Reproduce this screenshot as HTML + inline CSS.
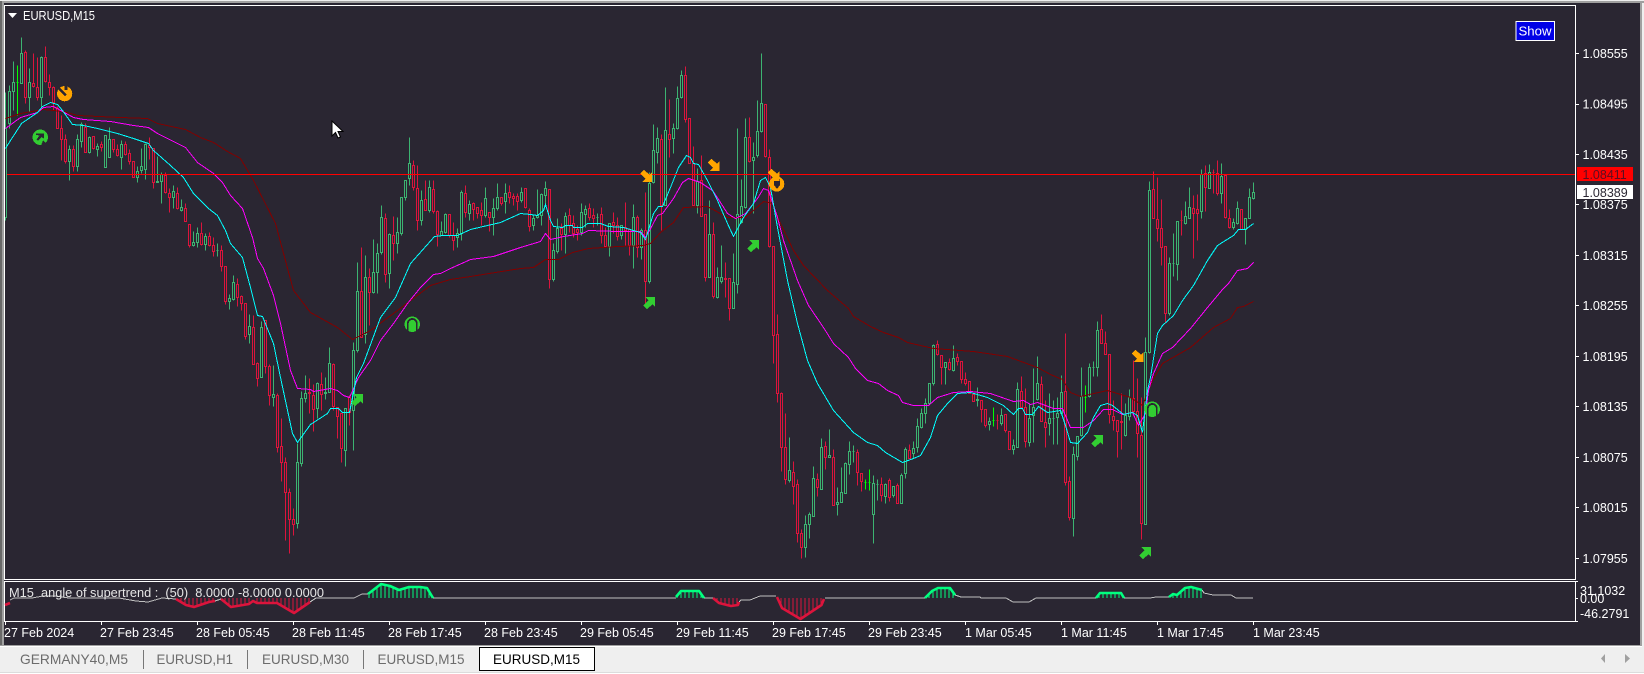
<!DOCTYPE html>
<html><head><meta charset="utf-8"><title>EURUSD,M15</title>
<style>
html,body{margin:0;padding:0;width:1644px;height:674px;overflow:hidden;background:#efefef}
svg{display:block;font-family:"Liberation Sans",Arial,sans-serif}
text{white-space:pre}
.p{font-size:12.5px;fill:#fff}
.t{font-size:14px;fill:#6c6c6c}
.c{fill:none;shape-rendering:crispEdges}
.l{fill:none;stroke-width:1;shape-rendering:crispEdges}
</style></head><body>
<svg width="1644" height="674" viewBox="0 0 1644 674" xmlns="http://www.w3.org/2000/svg">
<rect width="1644" height="674" fill="#efefef"/>
<rect x="0" y="1" width="1644" height="2" fill="#a0a0a0"/>
<rect x="0" y="1" width="2" height="645" fill="#696969"/>
<rect x="2" y="1" width="2" height="645" fill="#a0a0a0"/>
<rect x="1640" y="1" width="2" height="645" fill="#a0a0a0"/>
<rect x="4" y="3" width="1636" height="642" fill="#2a2632"/>
<rect x="0" y="645" width="1642" height="1" fill="#a0a0a0"/>
<rect x="0" y="646" width="1642" height="1" fill="#fff"/>
<g transform="translate(.5 .5)">
<path class="c" stroke="#3cb371" d="M5 92V128M4 128h2V217h-2zM5 217V220M9 85V91M8 91h2V123h-2zM9 123V128M13 61V82M12 82h2V91h-2zM13 91V110M21 37V53M20 53h2V83h-2zM29 68V82M28 82h2V97h-2zM29 97V112M41 56V57M40 57h2V97h-2zM41 97V106M69 145V149M68 149h2V161h-2zM69 161V180M77 134V139M76 139h2V166h-2zM77 166V171M81 122V124M80 124h2V141h-2zM81 141V147M89 136V137M88 137h2V152h-2zM89 152V153M97 143V146M96 146h2V149h-2zM97 149V156M104 135h2V167h-2zM109 127V139M108 139h2V157h-2zM121 140V144M120 144h2V157h-2zM121 157V169M137 166V171M136 171h2V177h-2zM137 177V182M141 148V166M140 166h2V170h-2zM141 170V173M145 143V144M144 144h2V169h-2zM145 169V179M157 156V181M156 181h2V182h-2zM161 172V174M160 174h2V181h-2zM161 181V203M173 185V191M172 191h2V197h-2zM173 197V208M181 199V207M180 207h2V210h-2zM181 210V211M193 231V242M192 242h2V245h-2zM193 245V246M197 227V233M196 233h2V242h-2zM197 242V247M205 233V236M204 236h2V244h-2zM205 244V250M217 243V250M216 250h2M217 250V256M229 294V298M228 298h2V301h-2zM229 301V309M233 275V282M232 282h2V299h-2zM233 299V300M249 314V326M248 326h2V334h-2zM249 334V343M261 321V327M260 327h2V377h-2zM273 365V394M272 394h2V397h-2zM273 397V406M297 443V462M296 462h2V523h-2zM297 523V528M301 391V398M300 398h2V463h-2zM301 463V466M305 375V393M304 393h2V398h-2zM305 398V402M317 382V383M316 383h2V408h-2zM317 408V418M325 377V392M324 392h2V393h-2zM325 393V399M329 347V363M328 363h2V392h-2zM344 408h2V450h-2zM345 450V466M353 342V350M352 350h2V410h-2zM353 410V450M357 262V291M356 291h2V350h-2zM357 350V352M365 255V277M364 277h2V334h-2zM365 334V343M373 239V272M372 272h2V292h-2zM373 292V293M377 243V253M376 253h2V272h-2zM377 272V293M381 205V217M380 217h2V252h-2zM381 252V254M389 233V234M388 234h2V273h-2zM389 273V288M397 217V232M396 232h2V243h-2zM397 243V253M400 197h2V233h-2zM401 233V235M404 180h2V197h-2zM405 197V200M409 137V163M408 163h2V178h-2zM409 178V185M421 190V200M420 200h2V220h-2zM421 220V225M429 180V187M428 187h2V210h-2zM429 210V212M441 221V231M440 231h2V235h-2zM445 213V214M444 214h2V232h-2zM445 232V233M457 228V233M456 233h2V237h-2zM457 237V247M461 190V192M460 192h2V233h-2zM461 233V240M469 200V204M468 204h2V213h-2zM469 213V220M485 187V198M484 198h2V215h-2zM485 215V217M493 198V208M492 208h2V217h-2zM493 217V235M497 183V197M496 197h2V208h-2zM497 208V210M505 183V193M504 193h2V201h-2zM505 201V213M521 187V192M520 192h2V200h-2zM521 200V202M533 215V218M532 218h2V225h-2zM533 225V230M537 189V215M536 215h2V217h-2zM537 217V218M541 193V194M540 194h2V215h-2zM541 215V225M545 181V188M544 188h2V195h-2zM545 195V205M553 243V250M552 250h2V279h-2zM553 279V281M557 218V228M556 228h2V251h-2zM557 251V253M565 212V216M564 216h2V234h-2zM565 234V253M581 203V212M580 212h2V232h-2zM581 232V235M585 205V209M584 209h2V214h-2zM585 214V227M597 213V217M596 217h2M597 217V225M608 223h2V246h-2zM609 246V256M620 225h2V235h-2zM621 235V239M633 204V217M632 217h2V245h-2zM633 245V268M641 228V230M640 230h2V247h-2zM641 247V259M649 172V183M648 183h2V281h-2zM649 281V283M653 124V150M652 150h2V182h-2zM653 182V183M657 127V138M656 138h2V152h-2zM657 152V163M665 87V130M664 130h2V205h-2zM673 123V128M672 128h2V138h-2zM673 138V153M677 86V98M676 98h2V128h-2zM677 128V129M681 70V75M680 75h2V97h-2zM681 97V98M697 168V181M696 181h2V205h-2zM697 205V213M709 200V234M708 234h2V277h-2zM717 267V277M716 277h2V297h-2zM717 297V298M721 245V277M720 277h2V281h-2zM721 281V283M733 253V282M732 282h2V308h-2zM737 128V214M736 214h2V284h-2zM737 284V293M741 179V206M740 206h2V222h-2zM741 222V223M745 118V137M744 137h2V207h-2zM745 207V208M753 142V157M752 157h2V160h-2zM753 160V213M757 100V131M756 131h2V155h-2zM757 155V157M761 53V103M760 103h2V131h-2zM761 131V132M789 437V470M788 470h2V480h-2zM789 480V482M805 515V524M804 524h2V547h-2zM805 547V557M809 512V514M808 514h2V524h-2zM809 524V538M813 466V478M812 478h2V516h-2zM821 438V447M820 447h2V489h-2zM829 429V455M828 455h2V457h-2zM837 487V502M836 502h2V504h-2zM837 504V515M841 467V492M840 492h2V502h-2zM845 462V463M844 463h2V493h-2zM849 441V451M848 451h2V464h-2zM849 464V474M853 445V451M852 451h2M853 451V462M873 475V483M872 483h2V514h-2zM873 514V543M877 479V484M876 484h2M877 484V500M885 483V484M884 484h2V496h-2zM885 496V503M892 486h2V495h-2zM893 495V497M901 473V475M900 475h2V503h-2zM905 447V449M904 449h2V473h-2zM905 473V478M913 441V448M912 448h2V453h-2zM913 453V458M917 418V426M916 426h2V447h-2zM917 447V452M921 408V413M920 413h2V427h-2zM921 427V428M925 398V403M924 403h2V413h-2zM925 413V423M928 383h2V403h-2zM929 403V405M933 344V345M932 345h2V383h-2zM933 383V385M944 362h2V367h-2zM945 367V384M953 345V358M952 358h2V370h-2zM953 370V371M977 387V399M976 399h2V400h-2zM977 400V406M989 417V421M988 421h2V424h-2zM989 424V430M1001 408V415M1000 415h2V423h-2zM1001 423V425M1013 439V445M1012 445h2V449h-2zM1013 449V454M1017 382V389M1016 389h2V447h-2zM1029 403V418M1028 418h2V442h-2zM1029 442V446M1033 368V407M1032 407h2V415h-2zM1033 415V442M1037 356V383M1036 383h2V399h-2zM1037 399V400M1049 393V418M1048 418h2V423h-2zM1049 423V435M1053 400V418M1052 418h2M1053 418V444M1057 397V413M1056 413h2V417h-2zM1057 417V444M1061 375V392M1060 392h2V413h-2zM1061 413V414M1073 446V454M1072 454h2V518h-2zM1073 518V536M1076 436h2V456h-2zM1077 456V460M1081 367V396M1080 396h2V435h-2zM1081 435V436M1089 363V367M1088 367h2V396h-2zM1089 396V397M1093 361V367M1092 367h2M1093 367V376M1097 321V330M1096 330h2V367h-2zM1097 367V376M1125 403V415M1124 415h2V435h-2zM1125 435V436M1129 389V397M1128 397h2V416h-2zM1129 416V420M1145 337V352M1144 352h2V524h-2zM1149 181V190M1148 190h2V352h-2zM1149 352V353M1169 257V263M1168 263h2V313h-2zM1169 313V315M1173 233V263M1172 263h2M1173 263V276M1176 221h2V264h-2zM1177 264V280M1185 201V216M1184 216h2V223h-2zM1185 223V224M1189 187V207M1188 207h2V218h-2zM1201 169V174M1200 174h2V211h-2zM1201 211V218M1209 164V172M1208 172h2V188h-2zM1221 163V176M1220 176h2V193h-2zM1221 193V203M1233 218V222M1232 222h2V227h-2zM1233 227V229M1237 201V208M1236 208h2V223h-2zM1237 223V224M1244 218h2V229h-2zM1245 229V244M1249 188V197M1248 197h2V218h-2zM1253 182V192M1252 192h2V198h-2zM1253 198V199"/>
<path class="c" stroke="#00ff00" d="M17 65V115M16 82h2M865 479V489M864 482h2M869 469V490M868 482h2M993 407V426M992 420h2M1085 385V412M1084 397h2"/>
<path class="c" stroke="#dc143c" d="M25 50V52M24 52h2V97h-2zM25 97V103M33 53V83M32 83h2V86h-2zM33 86V87M37 57V87M36 87h2V97h-2zM37 97V100M45 46V57M44 57h2V81h-2zM45 81V82M49 74V82M48 82h2V87h-2zM49 87V95M53 86V87M52 87h2V102h-2zM53 102V110M57 106V108M56 108h2V128h-2zM61 115V128M60 128h2V139h-2zM61 139V160M65 134V139M64 139h2V161h-2zM65 161V163M73 145V149M72 149h2V166h-2zM73 166V171M85 123V127M84 127h2V152h-2zM92 136h2V148h-2zM93 148V149M101 141V144M100 144h2V147h-2zM101 147V151M112 139h2V149h-2zM113 149V152M117 144V149M116 149h2V155h-2zM117 155V156M125 141V144M124 144h2V154h-2zM125 154V155M129 149V153M128 153h2V161h-2zM129 161V164M132 161h2V177h-2zM149 137V145M148 145h2V147h-2zM149 147V159M152 148h2V182h-2zM153 182V188M165 172V175M164 175h2V192h-2zM165 192V193M169 188V193M168 193h2V197h-2zM169 197V212M177 187V193M176 193h2V208h-2zM177 208V209M185 203V208M184 208h2V221h-2zM188 224h2V245h-2zM189 245V247M201 222V233M200 233h2V244h-2zM201 244V245M209 232V236M208 236h2V245h-2zM209 245V246M213 237V245M212 245h2V251h-2zM213 251V256M221 245V250M220 250h2V266h-2zM221 266V271M224 266h2V301h-2zM225 301V304M237 278V284M236 284h2V297h-2zM237 297V306M241 295V296M240 296h2V303h-2zM241 303V310M244 303h2V336h-2zM245 336V339M253 315V327M252 327h2V364h-2zM257 362V363M256 363h2V378h-2zM257 378V386M264 320h2V366h-2zM265 366V373M269 364V366M268 366h2V395h-2zM269 395V405M277 393V395M276 395h2V447h-2zM277 447V452M281 418V446M280 446h2V462h-2zM281 462V481M285 457V462M284 462h2V492h-2zM285 492V540M289 488V492M288 492h2V519h-2zM289 519V553M293 508V519M292 519h2V524h-2zM293 524V535M309 378V392M308 392h2V393h-2zM309 393V413M313 384V395M312 395h2V409h-2zM313 409V431M321 372V384M320 384h2V394h-2zM321 394V410M333 363V364M332 364h2V406h-2zM333 406V410M336 407h2V416h-2zM337 416V438M340 413h2V448h-2zM341 448V462M349 395V397M348 397h2V412h-2zM349 412V425M361 247V291M360 291h2V337h-2zM369 268V277M368 277h2V292h-2zM369 292V325M385 213V218M384 218h2V274h-2zM385 274V282M393 216V235M392 235h2V243h-2zM393 243V260M413 160V165M412 165h2V187h-2zM413 187V190M417 165V188M416 188h2V220h-2zM417 220V230M425 180V199M424 199h2V210h-2zM433 180V189M432 189h2V211h-2zM433 211V213M437 210V211M436 211h2V234h-2zM437 234V246M448 214h2V235h-2zM449 235V237M453 222V235M452 235h2V240h-2zM453 240V250M465 185V193M464 193h2V212h-2zM465 212V217M473 202V203M472 203h2V209h-2zM473 209V220M476 207h2V213h-2zM477 213V218M481 202V210M480 210h2V215h-2zM481 215V225M488 212h2V217h-2zM489 217V231M500 197h2V203h-2zM501 203V205M509 185V192M508 192h2V197h-2zM509 197V203M513 193V196M512 196h2V198h-2zM513 198V205M517 193V196M516 196h2V201h-2zM517 201V210M524 188h2V207h-2zM525 207V208M529 208V210M528 210h2V226h-2zM529 226V231M548 189h2V279h-2zM549 279V288M561 223V228M560 228h2V234h-2zM561 234V250M569 208V215M568 215h2V225h-2zM569 225V232M573 215V223M572 223h2V233h-2zM573 233V237M577 225V229M576 229h2V232h-2zM577 232V240M589 203V208M588 208h2V217h-2zM589 217V220M593 208V215M592 215h2V218h-2zM593 218V227M601 207V214M600 214h2V235h-2zM601 235V243M605 227V235M604 235h2V246h-2zM605 246V247M613 212V222M612 222h2V225h-2zM613 225V233M617 217V225M616 225h2V236h-2zM617 236V240M625 202V227M624 227h2V230h-2zM625 230V245M629 228V229M628 229h2V245h-2zM629 245V255M637 215V217M636 217h2V247h-2zM637 247V257M645 192V230M644 230h2V281h-2zM645 281V303M661 134V139M660 139h2V205h-2zM661 205V230M669 99V134M668 134h2V139h-2zM669 139V157M685 66V75M684 75h2V119h-2zM685 119V122M688 118h2V163h-2zM693 146V163M692 163h2V205h-2zM701 155V180M700 180h2V216h-2zM704 214h2V277h-2zM705 277V281M713 222V234M712 234h2V296h-2zM713 296V298M725 262V278M724 278h2V279h-2zM725 279V297M728 278h2V308h-2zM729 308V320M749 117V137M748 137h2V161h-2zM749 161V162M764 104h2V156h-2zM765 156V157M769 149V157M768 157h2V246h-2zM769 246V247M772 246h2V335h-2zM773 335V363M777 314V334M776 334h2V393h-2zM777 393V402M781 392V393M780 393h2V447h-2zM781 447V471M785 413V447M784 447h2V479h-2zM785 479V484M793 461V472M792 472h2V486h-2zM793 486V504M797 479V484M796 484h2V533h-2zM797 533V542M801 529V533M800 533h2V547h-2zM801 547V558M817 473V479M816 479h2V487h-2zM817 487V496M825 441V446M824 446h2V457h-2zM825 457V469M833 449V457M832 457h2V505h-2zM857 449V452M856 452h2V472h-2zM857 472V485M860 473h2V481h-2zM861 481V491M881 477V484M880 484h2V495h-2zM881 495V501M889 478V480M888 480h2V497h-2zM889 497V501M897 483V485M896 485h2V503h-2zM909 444V450M908 450h2V458h-2zM937 340V344M936 344h2V354h-2zM937 354V355M940 355h2V367h-2zM941 367V384M949 358V362M948 362h2V369h-2zM949 369V370M957 353V357M956 357h2V361h-2zM957 361V365M960 361h2V379h-2zM961 379V383M965 372V379M964 379h2V383h-2zM965 383V385M968 381h2V393h-2zM972 394h2V401h-2zM980 400h2V409h-2zM981 409V422M984 409h2V425h-2zM985 425V427M997 414V429M996 420h2M1004 414h2V430h-2zM1005 430V432M1008 431h2V449h-2zM1021 376V391M1020 391h2V407h-2zM1025 388V407M1024 407h2V441h-2zM1025 441V447M1041 376V384M1040 384h2V421h-2zM1045 400V422M1044 422h2V427h-2zM1045 427V447M1065 333V391M1064 391h2V482h-2zM1065 482V485M1069 476V481M1068 481h2V517h-2zM1069 517V520M1101 314V329M1100 329h2V343h-2zM1105 331V343M1104 343h2V354h-2zM1108 354h2V414h-2zM1109 414V423M1113 400V416M1112 416h2V420h-2zM1113 420V430M1116 420h2V431h-2zM1117 431V457M1121 393V421M1120 421h2V422h-2zM1121 422V449M1133 360V398M1132 398h2V411h-2zM1133 411V413M1137 378V411M1136 411h2V433h-2zM1137 433V457M1141 397V435M1140 435h2V523h-2zM1141 523V539M1153 171V189M1152 189h2V218h-2zM1157 177V219M1156 219h2V228h-2zM1157 228V241M1161 199V228M1160 228h2V247h-2zM1161 247V265M1164 246h2V313h-2zM1165 313V323M1181 210V235M1180 220h2M1193 195V208M1192 208h2V213h-2zM1193 213V258M1197 194V209M1196 209h2V213h-2zM1197 213V240M1205 165V173M1204 173h2V187h-2zM1205 187V211M1213 169V193M1212 172h2M1217 160V173M1216 173h2V193h-2zM1217 193V195M1224 175h2V217h-2zM1225 217V218M1229 209V218M1228 218h2V227h-2zM1229 227V228M1240 209h2V229h-2z"/>
<polyline class="l" stroke="#800000" points="5,118 20,113 43,109 63,111 77,115 120,117 147,118 157,123 185,129 200,137 213,142 227,151 240,158 253,180 275,223 293,290 310,312 337,327 352,339 370,330 397,310 430,285 450,279 470,276 520,268 533,267 545,259 558,259 572,252 588,248 617,246 643,245 650,243 660,232 673,222 683,207 707,206 727,217 745,217 763,201 772,203 780,223 793,250 803,265 827,290 848,308 853,316 870,326 883,332 898,337 907,342 920,345 933,348 973,351 1007,356 1037,367 1050,374 1062,379 1070,392 1080,396 1107,390 1130,397 1142,405 1152,380 1162,363 1190,347 1213,327 1230,318 1237,307 1243,306 1253,301"/>
<polyline class="l" stroke="#ff00ff" points="5,128 20,117 37,112 43,107 53,106 62,111 73,117 83,119 110,121 133,125 148,127 157,133 185,147 197,162 213,173 222,182 230,195 242,208 252,237 257,258 263,268 273,295 280,323 290,370 297,388 310,389 313,391 330,388 337,390 343,395 349,397 358,377 370,360 380,340 393,323 407,303 420,287 433,274 440,273 450,268 470,259 493,256 520,247 540,241 545,233 550,239 563,236 582,233 588,230 617,231 640,231 645,237 648,232 657,215 662,213 673,198 682,182 688,178 700,182 712,190 720,202 727,213 735,218 745,213 757,198 763,188 768,190 777,217 783,240 797,280 808,305 823,327 833,343 848,357 855,368 867,380 878,383 887,390 898,395 902,402 913,405 928,405 937,397 953,392 970,391 990,393 1013,401 1023,400 1030,404 1037,402 1053,408 1062,408 1070,427 1083,427 1093,420 1103,409 1112,409 1122,414 1132,412 1138,425 1145,413 1148,390 1153,373 1162,353 1172,347 1190,328 1207,307 1222,289 1228,283 1237,270 1247,268 1253,262"/>
<polyline class="l" stroke="#00ffff" points="5,148 10,140 21,123 37,112 42,106 50,102 57,104 62,110 72,124 83,125 97,128 117,133 133,138 148,143 153,150 170,165 183,177 193,193 208,208 217,215 225,230 230,243 242,257 250,287 257,315 262,316 273,343 280,377 292,433 297,442 310,424 327,413 330,408 338,408 342,412 349,412 356,377 363,363 380,317 395,297 410,263 434,236 443,235 457,235 470,229 487,225 500,222 520,213 530,214 537,215 543,210 545,204 550,220 553,226 562,227 565,225 572,225 573,227 582,227 587,223 600,223 608,226 623,227 633,230 640,232 645,239 653,213 658,206 662,206 670,187 678,167 686,155 690,157 693,163 698,164 707,180 717,200 727,223 733,236 743,217 753,203 760,180 765,177 770,187 777,227 787,280 797,323 807,360 817,383 833,410 853,432 867,442 877,445 885,452 902,462 913,458 920,455 930,437 937,415 947,403 957,393 970,392 987,397 1003,405 1013,414 1018,408 1022,408 1025,414 1032,414 1038,406 1047,412 1060,410 1065,425 1070,442 1077,443 1087,432 1093,417 1100,405 1107,403 1112,405 1123,414 1132,412 1137,415 1142,432 1147,390 1150,377 1157,333 1162,325 1173,315 1182,300 1193,285 1207,260 1217,245 1233,235 1238,229 1245,229 1253,223"/>
</g>
<rect x="7" y="174" width="1568" height="1" fill="#ff0000"/>
<!-- green up-right arrows -->
<g fill="#32cd32" shape-rendering="crispEdges">
<path transform="translate(643 297)" d="M2 0H12V10L9.5 7.5L4 12L0 8.5L5.5 3.5Z"/>
<path transform="translate(747 240)" d="M2 0H12V10L9.5 7.5L4 12L0 8.5L5.5 3.5Z"/>
<path transform="translate(1091 435)" d="M2 0H12V10L9.5 7.5L4 12L0 8.5L5.5 3.5Z"/>
<path transform="translate(1139 547)" d="M2 0H12V10L9.5 7.5L4 12L0 8.5L5.5 3.5Z"/>
<path transform="translate(351 394)" d="M2 0H12V10L9.5 7.5L4 12L0 8.5L5.5 3.5Z"/>
</g>
<!-- green circled arrows -->
<g shape-rendering="crispEdges">
<circle cx="40.3" cy="137.3" r="7.7" fill="#32cd32"/>
<path d="M36 133.5H44V138.5L41.5 137L38 141L36.5 139.5L39.5 135.5L36 135Z" fill="#2a2632"/>
<path d="M41 145.5L43 140.5L46 143Z" fill="#2a2632"/>
<circle cx="412.3" cy="324.3" r="7.7" fill="#32cd32"/>
<path d="M407.8 332V323.5a4.5 4.5 0 0 1 9 0V332" fill="none" stroke="#2a2632" stroke-width="1.8"/>
<circle cx="1152.3" cy="409.3" r="7.7" fill="#32cd32"/>
<path d="M1147.8 417V408.5a4.5 4.5 0 0 1 9 0V417" fill="none" stroke="#2a2632" stroke-width="1.8"/>
</g>
<!-- orange -->
<g fill="#ffa500" shape-rendering="crispEdges">
<circle cx="64.7" cy="93.7" r="7.6"/>
<path d="M59 88.5L66 95.5" stroke="#2a2632" stroke-width="2.4" fill="none"/>
<path d="M64.5 85.5H67.5V90H64.5Z" fill="#2a2632"/>
<circle cx="776.7" cy="184" r="7.6"/>
<path d="M774 179H780V185L777 189L774 185Z" fill="#2a2632"/>
<path transform="translate(640 182) scale(1 -1)" d="M2 0H12V10L9.5 7.5L4 12L0 8.5L5.5 3.5Z"/>
<path transform="translate(707.5 171) scale(1 -1)" d="M2 0H12V10L9.5 7.5L4 12L0 8.5L5.5 3.5Z"/>
<path transform="translate(767.5 181) scale(1 -1)" d="M2 0H12V10L9.5 7.5L4 12L0 8.5L5.5 3.5Z"/>
<path transform="translate(1131.5 362) scale(1 -1)" d="M2 0H12V10L9.5 7.5L4 12L0 8.5L5.5 3.5Z"/>
</g>
<!-- cursor -->
<path d="M332 121V136L335.5 132.5L338 138L340.5 137L338 131.5L343 131.5Z" fill="#fff" stroke="#000" stroke-width="1"/>
<!-- frames -->
<rect x="4.5" y="5.5" width="1571" height="574" fill="none" stroke="#fff"/>
<rect x="4.5" y="581.5" width="1571" height="40" fill="none" stroke="#fff"/>
<g stroke="#fff" shape-rendering="crispEdges">
<path d="M1576 53.5h3M1576 104.5h3M1576 154.5h3M1576 204.5h3M1576 255.5h3M1576 305.5h3M1576 356.5h3M1576 406.5h3M1576 457.5h3M1576 507.5h3M1576 558.5h3M1576 598.5h2M1576 581.5h2M1576 621.5h2"/>
<path d="M5.5 622v3M101.5 622v3M197.5 622v3M293.5 622v3M389.5 622v3M485.5 622v3M581.5 622v3M677.5 622v3M773.5 622v3M869.5 622v3M965.5 622v3M1061.5 622v3M1157.5 622v3M1253.5 622v3"/>
</g>
<!-- title -->
<path d="M8 13H17L12.5 18Z" fill="#fff"/>
<text x="23" y="20" font-size="13" fill="#fff" textLength="72" lengthAdjust="spacingAndGlyphs">EURUSD,M15</text>
<!-- show -->
<rect x="1516" y="21.5" width="38.5" height="19" fill="#0000e6" stroke="#fff"/>
<text x="1518.5" y="35.5" font-size="13" fill="#fff" textLength="33" lengthAdjust="spacingAndGlyphs">Show</text>
<!-- price labels -->
<g class="p">
<text class="p" x="1582.5" y="58">1.08555</text>
<text class="p" x="1582.5" y="108.5">1.08495</text>
<text class="p" x="1582.5" y="159">1.08435</text>
<text class="p" x="1582.5" y="209">1.08375</text>
<text class="p" x="1582.5" y="260">1.08315</text>
<text class="p" x="1582.5" y="310">1.08255</text>
<text class="p" x="1582.5" y="361">1.08195</text>
<text class="p" x="1582.5" y="411">1.08135</text>
<text class="p" x="1582.5" y="462">1.08075</text>
<text class="p" x="1582.5" y="512">1.08015</text>
<text class="p" x="1582.5" y="563">1.07955</text>
</g>
<rect x="1577" y="167" width="56" height="14" fill="#ff0000"/>
<text x="1582.5" y="179" font-size="12.5" fill="#5a0f22">1.08411</text>
<rect x="1577" y="185" width="56" height="14" fill="#fff"/>
<text x="1582.5" y="197" font-size="12.5" fill="#2a2632">1.08389</text>
<!-- sub window -->
<path class="l" stroke="#c0c0c0" fill="none" shape-rendering="auto" d="M10 600L14 598H32L43 596H55L69 598H119L136 601L148 602L162 598L176 599M215 601L221 599M310 602L316 598H354L362 594H368M433 598H676M704 598H713M739 602L741 600H750L760 596H776M825 598H925M955 595L961 597H980L981 598H1006L1013 602H1029L1036 598H1096M1124 598H1150L1156 597H1169M1202 590L1204 593L1213 595H1231L1236 598H1253" stroke-width="1"/>
<g fill="none" shape-rendering="crispEdges">
<path stroke="#00ff7f" d="M369 598V594M373 598V590M377 598V586M381 598V585M385 598V585M389 598V586M393 598V588M397 598V590M401 598V589M405 598V588M409 598V587M413 598V587M417 598V587M421 598V587M425 598V588M429 598V592M677 598V597M681 598V591M685 598V591M689 598V591M693 598V591M697 598V591M701 598V594M929 598V594M933 598V591M937 598V589M941 598V588M945 598V588M949 598V588M953 598V592M1099 598V594M1103 598V593M1107 598V593M1111 598V593M1115 598V593M1119 598V593M1173 598V594M1177 598V595M1181 598V591M1185 598V588M1189 598V587M1193 598V587M1197 598V588M1201 598V590"/>
<path stroke="#dc143c" d="M181 598V602M185 598V604M189 598V606M193 598V607M197 598V606M201 598V605M205 598V604M209 598V602M213 598V601M225 598V603M229 598V606M233 598V607M237 598V606M241 598V605M245 598V605M249 598V604M257 598V603M261 598V603M265 598V603M269 598V603M273 598V603M277 598V603M281 598V606M285 598V609M289 598V611M293 598V613M297 598V612M301 598V609M305 598V606M309 598V602M717 598V602M721 598V604M725 598V605M729 598V606M733 598V606M737 598V605M781 598V607M785 598V611M789 598V613M793 598V615M797 598V617M801 598V619M805 598V617M809 598V614M813 598V611M817 598V608M821 598V605"/>
</g>
<g fill="none" stroke-width="2.6" stroke-linejoin="round">
<path stroke="#00ff7f" d="M368 594L381 584L390 586L399 590L409 587H420L427 588L433 598M676 597L681 591H699L704 598M925 598L932 591L938 588H950L955 595M1096 598L1100 593H1121L1124 598M1169 597L1173 594L1177 595L1185 588L1191 587L1202 590"/>
<path stroke="#dc143c" d="M5 605L10 603M176 599L186 605L194 607L209 602L215 601M221 599L231 607L249 604L253 601L257 603L277 603L294 613L310 602M713 598L719 603L731 606L738 605L739 602M777 597L782 608L800.5 619L821.5 605L824 599"/>
</g>
<text x="9" y="597" font-size="12.5" fill="#e6e6e6" textLength="315" lengthAdjust="spacingAndGlyphs" xml:space="preserve">M15  angle of supertrend :  (50)  8.0000 -8.0000 0.0000</text>
<text class="p" x="1580" y="595">31.1032</text>
<text class="p" x="1580" y="603">0.00</text>
<text class="p" x="1580" y="618">-46.2791</text>
<!-- dates -->
<text class="p" x="4" y="637">27 Feb 2024</text>
<text class="p" x="100" y="637">27 Feb 23:45</text>
<text class="p" x="196" y="637">28 Feb 05:45</text>
<text class="p" x="292" y="637">28 Feb 11:45</text>
<text class="p" x="388" y="637">28 Feb 17:45</text>
<text class="p" x="484" y="637">28 Feb 23:45</text>
<text class="p" x="580" y="637">29 Feb 05:45</text>
<text class="p" x="676" y="637">29 Feb 11:45</text>
<text class="p" x="772" y="637">29 Feb 17:45</text>
<text class="p" x="868" y="637">29 Feb 23:45</text>
<text class="p" x="965" y="637">1 Mar 05:45</text>
<text class="p" x="1061" y="637">1 Mar 11:45</text>
<text class="p" x="1157" y="637">1 Mar 17:45</text>
<text class="p" x="1253" y="637">1 Mar 23:45</text>
<!-- tabs -->
<rect x="0" y="672" width="1644" height="1" fill="#dcdcdc"/>
<rect x="0" y="673" width="1644" height="1" fill="#fff"/>
<rect x="479.5" y="647.5" width="115" height="23" fill="#fff" stroke="#000"/>
<path d="M143.5 650V669M247.5 650V669M363.5 650V669" stroke="#777" shape-rendering="crispEdges"/>
<text class="t" x="20" y="664" textLength="108" lengthAdjust="spacingAndGlyphs">GERMANY40,M5</text>
<text class="t" x="156.5" y="664" textLength="76.5" lengthAdjust="spacingAndGlyphs">EURUSD,H1</text>
<text class="t" x="262" y="664" textLength="87" lengthAdjust="spacingAndGlyphs">EURUSD,M30</text>
<text class="t" x="377.5" y="664" textLength="87" lengthAdjust="spacingAndGlyphs">EURUSD,M15</text>
<text x="493" y="664" font-size="14" fill="#000" textLength="87" lengthAdjust="spacingAndGlyphs">EURUSD,M15</text>
<path d="M1605 654V663L1601 658.5Z" fill="#a0a0a0"/>
<path d="M1625 654V663L1630 658.5Z" fill="#a0a0a0"/>
</svg>
</body></html>
